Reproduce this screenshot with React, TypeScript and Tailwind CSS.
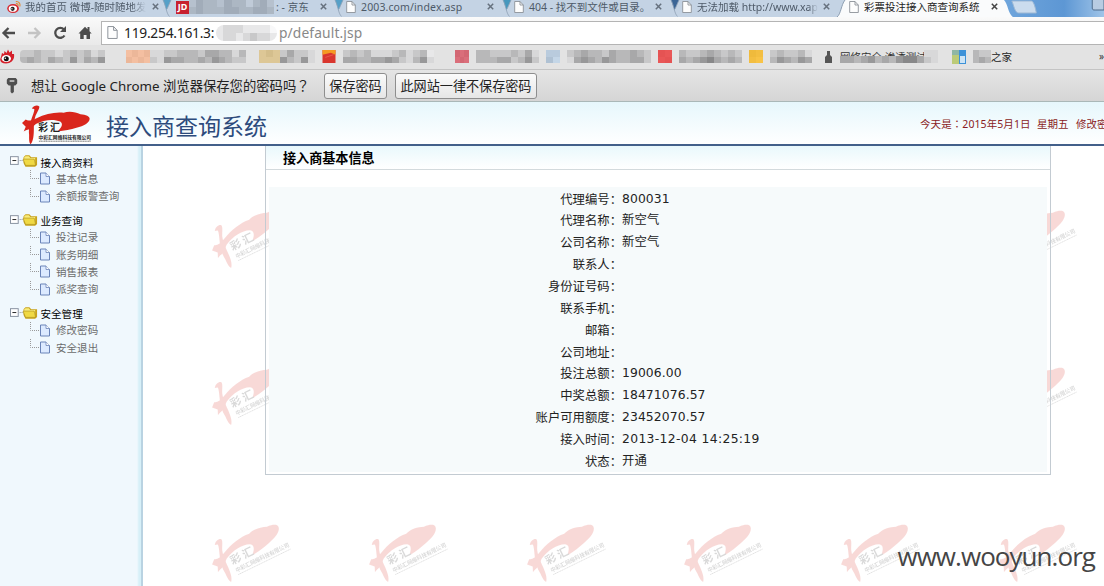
import React from "react";

const UI = "font-['Noto_Sans','Noto_Sans_CJK_SC',sans-serif]";

function Mosaic({ rows, tint, className }: { rows: string[]; tint?: string; className: string }) {
  const cols = rows[0].length;
  return (
    <svg viewBox={`0 0 ${cols} ${rows.length}`} preserveAspectRatio="none" shapeRendering="crispEdges" className={`shrink-0 ${className}`}>
      {rows.map((row, y) =>
        row.split("").map((c, x) => {
          const v = parseInt(c, 16) * 16 + 8;
          return <rect key={`${x}-${y}`} x={x} y={y} width={1.02} height={1.02} fill={`rgb(${v},${v},${v + 1})`} />;
        })
      )}
      {tint && <rect width={cols} height={rows.length} fill={tint} />}
    </svg>
  );
}

function PageIcon({ className = "" }: { className?: string }) {
  return (
    <svg viewBox="0 0 10 12" className={`h-3 w-2.5 shrink-0 ${className}`} fill="#fdfdfd" stroke="#8c9299" strokeWidth="0.9">
      <path d="M0.7.5H6L9.3 4V11.5H.7Z" />
      <path d="M6 .5V4H9.3" fill="none" />
    </svg>
  );
}

function WeiboIcon({ className = "" }: { className?: string }) {
  return (
    <svg viewBox="0 0 15 14" className={`shrink-0 ${className}`}>
      <ellipse cx="6.5" cy="8.6" rx="6.3" ry="4.8" fill="#d62a32" />
      <ellipse cx="6.3" cy="8.8" rx="4.5" ry="3.3" fill="#fff" />
      <circle cx="6" cy="9" r="2.2" fill="#222" />
      <circle cx="5.3" cy="8.9" r=".7" fill="#fff" />
      <path d="M9.5 1.2C12.5.7 14.8 3.5 13.6 6.4M9.6 3.4C11.2 3 12.3 4.4 11.7 6" fill="none" stroke="#e58a32" strokeWidth="1.2" />
    </svg>
  );
}

function Flame() {
  return (
    <svg viewBox="0 0 15 15" className="-mt-px h-[15px] w-[15px] shrink-0">
      <path d="M1 8L2 4 4 5 4.500 2 6.500 4 8 .5 9.500 3.500 12 1.500 12 5 14 5C15 11 11 14.500 6 14.500S-1 12 1 8Z" fill="#d5202a" />
      <ellipse cx="6.300" cy="9.500" rx="4.700" ry="3.600" fill="#fff" />
      <circle cx="6.300" cy="9.800" r="2.500" fill="#111" />
      <circle cx="5.300" cy="9.200" r=".8" fill="#fff" />
    </svg>
  );
}

function Cross({ active = false }: { active?: boolean }) {
  return (
    <svg viewBox="0 0 7 7" className="mb-px h-[7px] w-[7px] shrink-0" stroke={active ? "#444" : "#66717e"} strokeWidth="1.5">
      <path d="M.8.8L6.200 6.200M6.200.8L.8 6.200" />
    </svg>
  );
}

function TabEdge({ gap = "#4f7fb5" }: { gap?: string }) {
  return (
    <svg viewBox="0 0 14 17" className="h-[17px] w-3.5 shrink-0">
      <path d="M3 0H11L6.500 10Z" fill={gap} />
      <path d="M3 0C6 5 6 13 9.500 16.500" fill="none" stroke="#8fa1b5" strokeWidth=".8" />
      <path d="M11 0L7 9" fill="none" stroke="#8fa1b5" strokeWidth=".8" />
    </svg>
  );
}

function TabStrip() {
  return (
    <div className="flex h-[17px] w-full items-start overflow-hidden bg-[#c4d3e4] text-[10.500px] leading-[14px] whitespace-nowrap text-[#4e5a68]">
      <div className="flex w-[160px] shrink-0 items-center pl-[7px]">
        <WeiboIcon className="h-3.5 w-[14px]" />
        <span className="ml-1 w-[121px] [mask-image:linear-gradient(90deg,#000_88%,transparent)]">我的首页 微博-随时随地发</span>
        <span className="ml-[6px] flex"><Cross /></span>
      </div>
      <TabEdge gap="#55a0c8" />
      <div className="flex w-[158px] shrink-0 items-center pl-[2px]">
        <span className="flex h-[13px] w-[13px] items-center justify-center bg-[#c8202f] text-[9px] font-bold text-white">JD</span>
        <Mosaic rows={["cabbcabbdbac", "babbbaabbaab"]} tint="rgba(150,180,215,.35)" className="h-3.5 w-[85px]" />
        <span className="ml-[2px]">: - 京东</span>
        <span className="ml-[11px] flex"><Cross /></span>
      </div>
      <TabEdge gap="#55a0c8" />
      <div className="flex w-[154px] shrink-0 items-center">
        <PageIcon />
        <span className="ml-[5px] w-[102px] tracking-[0.12px]">2003.com/index.asp</span>
        <span className="ml-[24px] flex"><Cross /></span>
      </div>
      <TabEdge gap="#4597bd" />
      <div className="flex w-[154px] shrink-0 items-center">
        <PageIcon />
        <span className="ml-[5px] w-[124px]">404 - 找不到文件或目录。</span>
        <span className="ml-[2px] flex"><Cross /></span>
      </div>
      <TabEdge gap="#3b6596" />
      <div className="flex w-[151px] shrink-0 items-center">
        <PageIcon />
        <span className="ml-[5px] w-[121px] [mask-image:linear-gradient(90deg,#000_92%,transparent)]">无法加载 http://www.xap</span>
        <span className="ml-[5px] flex"><Cross /></span>
      </div>
      <svg viewBox="0 0 16 17" className="h-[17px] w-4 shrink-0">
        <path d="M4 17C8 14 8 5 12 0H16V17Z" fill="#fafbfc" />
        <path d="M4 17C8 14 8 5 12 0" fill="none" stroke="#8d9eb2" />
      </svg>
      <div className="flex h-[17px] w-[155px] shrink-0 items-start bg-[#fafbfc] text-[#222]">
        <div className="flex h-3.5 items-center">
          <PageIcon />
          <span className="ml-[5px] w-[117px]">彩票投注接入商查询系统</span>
          <span className="ml-[10px] flex"><Cross active /></span>
        </div>
      </div>
      <svg viewBox="0 0 102 17" preserveAspectRatio="none" className="h-[17px] min-w-0 grow">
        <defs>
          <linearGradient id="sky"><stop offset="0" stopColor="#6fa5dc" /><stop offset=".6" stopColor="#5d97d4" /><stop offset="1" stopColor="#9fc4e8" /></linearGradient>
        </defs>
        <rect width="102" height="17" fill="url(#sky)" />
        <path d="M0 0C4 4 4 13 9 17H0Z" fill="#fafbfc" />
        <path d="M8 1H28C31 1 33 13 33 13H15C11 13 10 5 8 1Z" fill="#cbdcee" stroke="#9db8d4" />
        <path d="M90 0V8C90 10 91 10 93 10H102V0" fill="#b8cce2" stroke="#4e6b8c" />
      </svg>
    </div>
  );
}

function Toolbar() {
  return (
    <div className="flex h-[28px] w-full items-center bg-[linear-gradient(#fafafa,#e9e9e9)] pt-[3px]">
      <svg viewBox="0 0 100 24" className="h-6 w-[100px] shrink-0" fill="none">
        <path d="M15 12H4M8.500 7L3.500 12 8.500 17" stroke="#4c4c4c" strokeWidth="2.300" />
        <path d="M28 12H39M34.500 7L39.500 12 34.500 17" stroke="#c3c3c3" strokeWidth="2.300" />
        <path d="M64 8.500A5 5 0 1 0 64.500 14.500" stroke="#4c4c4c" strokeWidth="2.300" />
        <path d="M66 5V11H60Z" fill="#4c4c4c" />
        <path d="M78.500 12.500L85 5.800 87.500 8.200V6H89.500V10.200L91.700 12.500H90V18H86.500V14H83.700V18H80.200V12.500Z" fill="#4c4c4c" />
      </svg>
      <div className="ml-px flex h-6 grow items-center border-y border-l border-[#b4b4b4] bg-white pl-[5px] text-[13.800px] leading-5 text-[#222]">
        <PageIcon className="h-[13px] w-[11px]" />
        <span className="ml-[6px] w-[93px] tracking-[-0.25px]">119.254.161.3:</span>
        <Mosaic rows={["edddeeeef", "eddedcdde"]} className="-ml-px h-4 w-[61px] rounded-full" />
        <span className="ml-[2px] tracking-[0.12px] text-[#888]">p/default.jsp</span>
      </div>
    </div>
  );
}

const GREY_A = ["ccbccdcbcbdc", "babcabc9cab9"];

function Bookmarks() {
  return (
    <div className="flex h-[25px] w-full items-start overflow-hidden border-b border-[#c4c4c4] bg-[#e3e3e3] pt-[5px]">
      <Flame />
      <Mosaic rows={GREY_A} className="ml-[5px] h-[13px] w-[85px] rounded-l" />
      <Mosaic rows={["eded", "dede"]} tint="rgba(255,150,90,.5)" className="ml-[21px] h-[13px] w-6" />
      <Mosaic rows={["ddccbbbcaabbdb", "cd9aabbab9abcc"]} className="h-[13px] w-[96px]" />
      <Mosaic rows={["dcd", "ddd"]} tint="rgba(230,175,50,.4)" className="ml-[13px] h-[13px] w-[21px]" />
      <Mosaic rows={["caccd", "9bc9d"]} className="h-[13px] w-[35px]" />
      <svg viewBox="0 0 14 14" className="ml-[7px] h-[13px] w-3.5 shrink-0">
        <rect width="14" height="14" fill="#d9362e" />
        <path d="M0 5V0H14V5L9 3Z" fill="#f49a22" />
        <path d="M3 8L12 5" stroke="#e7574e" />
      </svg>
      <Mosaic rows={["cbcbdddcbdcbe", "aabbaa9acdb9d"]} className="ml-[7px] h-[13px] w-[91px]" />
      <Mosaic rows={["aba", "bab"]} tint="rgba(240,60,80,.6)" className="ml-[21px] h-[13px] w-3.5" />
      <Mosaic rows={["bbcccbcad", "bbbaacb9c"]} className="ml-[7px] h-[13px] w-[63px]" />
      <Mosaic rows={["dd", "ce"]} tint="rgba(130,180,230,.35)" className="ml-[7px] h-[13px] w-3.5" />
      <Mosaic rows={["cbabbcabbabc", "da9ab9abbaac"]} className="ml-[7px] h-[13px] w-[84px]" />
      <Mosaic rows={["ab", "ba"]} tint="rgba(250,55,55,.75)" className="ml-[7px] h-[13px] w-3.5" />
      <Mosaic rows={["bccbabcbc", "aba98abab"]} className="ml-[7px] h-[13px] w-[63px]" />
      <Mosaic rows={["cd", "de"]} tint="rgba(255,180,0,.7)" className="ml-[7px] h-[13px] w-3.5" />
      <Mosaic rows={["cbccbd", "b9ab9a"]} className="ml-[7px] h-[13px] w-[42px]" />
      <svg viewBox="0 0 14 14" className="ml-[10px] h-3.5 w-3.5 shrink-0">
        <path d="M5 1H8V5L10 7V13H3V7L5 5Z" fill="#565656" />
      </svg>
      <div className="ml-[4px] flex h-3.5 w-[84px] shrink-0 flex-col text-[10.500px] leading-[15px] whitespace-nowrap text-[#333]">
        <span className="h-[6px] shrink-0">网络安全 渗透测试</span>
        <Mosaic rows={["aaba9bab988a"]} className="z-10 block h-[7px] w-[84px]" />
        <span className="z-10 h-[4px] w-[84px] shrink-0 bg-[#e3e3e3]" />
      </div>
      <Mosaic rows={["dd", "cd"]} className="h-[13px] w-3.5" />
      <svg viewBox="0 0 14 14" className="ml-[14px] h-3.5 w-3.5 shrink-0">
        <rect width="14" height="14" fill="#3d92d8" />
        <path d="M0 0H7V5H0Z" fill="#8fb7a4" />
        <path d="M0 5H7V14H0Z" fill="#bccb78" />
        <path d="M8 6H13V13H8Z" fill="#cde4f5" />
      </svg>
      <Mosaic rows={["bcc", "bab"]} className="ml-[7px] h-[13px] w-[18px]" />
      <span className="text-[10.500px] leading-[15px] whitespace-nowrap text-[#222]">之家</span>
      <span className="ml-auto text-[10px] leading-[13px] text-[#333]">»</span>
    </div>
  );
}

function PasswordBar() {
  const button = "ml-2 flex h-[26px] items-center justify-center rounded-[3px] border border-[#8e8e8e] bg-[linear-gradient(#fbfbfb,#e6e6e6)] text-[13.100px] whitespace-nowrap";
  return (
    <div className="flex h-8 w-full items-center border-b border-[#aab8b8] bg-[linear-gradient(#e5e5e5,#d5d5d5)] text-[13.330px] leading-5 text-[#222]">
      <svg viewBox="0 0 12 18" className="ml-[6px] h-[17px] w-3 shrink-0">
        <path d="M2 1H10L11.500 3V7L9.500 9H8V16L6 17.500 4.500 16V9H2.500L.5 7V3Z" fill="#4f4f4f" />
        <path d="M3.500 3.500H8.500V5H3.500Z" fill="#d8d8d8" />
      </svg>
      <span className="ml-[13px] w-[285px] whitespace-nowrap">想让 Google Chrome 浏览器保存您的密码吗<span className="font-['Noto_Sans_CJK_TC',sans-serif] leading-4">？</span></span>
      <span className={`${button} w-[63px]`}>保存密码</span>
      <span className={`${button} w-[142px]`}>此网站一律不保存密码</span>
    </div>
  );
}

function Logo({ className }: { className: string }) {
  return (
    <svg viewBox="64 18 210 118" className={className}>
      <path
        d="M67 71L78 61C84 66 96 64 110 57C135 45 165 38 190 41C205 35 225 38 240 45C256 46 268 51 267 59C266 70 250 80 228 85C212 90 192 94 172 96C184 85 190 74 180 67C160 58 132 62 108 74L92 88C84 92 76 92 72 96L78 82Z"
        fill="#d9261c"
      />
      <path d="M96 28C101 20 112 17 118 22C120 28 112 38 107 50C102 64 102 80 102 90C102 108 100 126 92 134C87 128 88 116 88 106C86 92 89 78 94 62C99 48 105 34 103 30Z" fill="#d9261c" />
      <text x="115" y="95" fontSize="29" fontWeight="700" textLength="64" fill="#222" className="font-['Noto_Sans_CJK_SC',sans-serif]">彩汇</text>
      <text x="116" y="118" fontSize="15" fontWeight="700" textLength="155" lengthAdjust="spacingAndGlyphs" fill="#222" className="font-['Noto_Sans_CJK_SC',sans-serif]">中彩汇网络科技有限公司</text>
      <path d="M117 125H270" stroke="#444" strokeWidth="2" strokeDasharray="4 1" />
    </svg>
  );
}

function PageHeader() {
  return (
    <header className="flex h-[44px] w-full items-center overflow-hidden border-b-[2px] border-[#43608a] bg-[linear-gradient(#e6f7fc,#ffffff)] whitespace-nowrap">
      <Logo className="mt-[3px] ml-[21px] h-[40px] w-[71px] shrink-0" />
      <h1 className="ml-[14px] pt-[5px] text-[23px] leading-8 text-[#2d4b7c]">接入商查询系统</h1>
      <div className="ml-[653px] flex shrink-0 pt-px text-[10.500px] leading-4 text-[#8a1c24]">
        <span className="w-[117px] shrink-0 tracking-[0.08px]">今天是<span className="font-['Noto_Sans_CJK_TC',sans-serif] leading-3">：</span>2015年5月1日</span>
        <span className="w-[39px] shrink-0">星期五</span>
        <span>修改密码</span>
      </div>
    </header>
  );
}

const TREE = [
  { name: "接入商资料", items: ["基本信息", "余额报警查询"] },
  { name: "业务查询", items: ["投注记录", "账务明细", "销售报表", "派奖查询"] },
  { name: "安全管理", items: ["修改密码", "安全退出"] },
];

function Sidebar() {
  return (
    <nav className="flex w-[143px] shrink-0 flex-col gap-[6.800px] border-r-2 border-[#b9d3e2] bg-[linear-gradient(90deg,#f0f8fd_137px,#d7f0f8_139px)] pt-[7px] text-[10.550px]">
      {TREE.map((group) => (
        <div key={group.name}>
          <div className="flex h-[17.250px] items-center text-black">
            <svg viewBox="0 0 30 17" className="ml-[10px] h-[17px] w-[29px] shrink-0">
              <rect x=".5" y="3.500" width="8" height="8" fill="#fff" stroke="#8791a0" />
              <path d="M2.500 7.500H6.500" stroke="#222" />
              <path d="M10 7.500H14" stroke="#888" strokeDasharray="1 1" />
              <path d="M14 4L16 2H20L22 4H28V12L26 14H16L14 10Z" fill="#c9a31b" />
              <path d="M14.500 4.500L16 3H19.500L21 5H26V11L25 12.500H16.500Z" fill="#f9ec7a" />
              <path d="M13.500 6H25L26.500 12.500H16Z" fill="#f0d944" stroke="#a98a1c" strokeWidth=".6" />
            </svg>
            <span className="ml-[1.500px] pt-[2px] leading-[16px]">{group.name}</span>
          </div>
          {group.items.map((item) => (
            <div key={item} className="flex h-[17.250px] items-center text-[#6b6b6b]">
              <svg viewBox="0 0 22 17" className="ml-[30px] h-[17px] w-[22px] shrink-0">
                <path d="M.5 0V8.500H9" fill="none" stroke="#999" strokeDasharray="1 1" />
                <path d="M10.500 3H16L19.500 6.500V14H10.500Z" fill="#dceaff" stroke="#6b84b8" />
                <path d="M16 3V6.500H19.500" fill="#fff" stroke="#6b84b8" strokeWidth=".8" />
              </svg>
              <span className="ml-[4px] leading-[16px]">{item}</span>
            </div>
          ))}
        </div>
      ))}
    </nav>
  );
}

const FIELDS: [string, string][] = [
  ["代理编号", "800031"],
  ["代理名称", "新空气"],
  ["公司名称", "新空气"],
  ["联系人", ""],
  ["身份证号码", ""],
  ["联系手机", ""],
  ["邮箱", ""],
  ["公司地址", ""],
  ["投注总额", "19006.00"],
  ["中奖总额", "18471076.57"],
  ["账户可用额度", "23452070.57"],
  ["接入时间", "2013-12-04 14:25:19"],
  ["状态", "开通"],
];

function Backdrop() {
  return (
    <div className="absolute top-[50.500px] left-[61px] grid grid-cols-[repeat(6,157.300px)] grid-rows-[repeat(3,157.300px)]">
      {Array.from({ length: 18 }, (_, i) => (
        <div key={i} className="pt-[16px] pl-[4px] opacity-[0.17]">
          <Logo className="h-[45px] w-[80px] -rotate-[26deg]" />
        </div>
      ))}
    </div>
  );
}

function InfoPanel() {
  return (
    <section className="relative h-[329px] w-[786px] border border-t-0 border-[#c3cbd2]">
      <h2 className="h-6 border-b border-[#d3dadd] bg-[linear-gradient(#e9f8fc,#ffffff)] pl-[17px] text-[13.100px] leading-[24px] font-bold text-black">接入商基本信息</h2>
      <dl className="mx-[3px] mt-[17px] h-[285px] bg-[#f6fafb] pt-[1.600px] text-[12.350px] leading-[21.860px] text-[#222]">
        {FIELDS.map(([label, value]) => (
          <div key={label} className="flex h-[21.860px]">
            <dt className="w-[353px] shrink-0 text-right">{label}：</dt>
            <dd className={value.includes(":") ? "font-['DejaVu_Sans',sans-serif] tracking-[0.35px]" : "font-['DejaVu_Sans','Noto_Sans_CJK_SC',sans-serif] tracking-[0.1px]"}>{value}</dd>
          </div>
        ))}
      </dl>
    </section>
  );
}

export default function App() {
  return (
    <div className={`relative flex h-[586px] w-[1104px] flex-col overflow-hidden bg-white ${UI}`}>
      <TabStrip />
      <Toolbar />
      <Bookmarks />
      <PasswordBar />
      <PageHeader />
      <div className="flex min-h-0 grow">
        <Sidebar />
        <main className="relative grow overflow-hidden pl-[122px]">
          <Backdrop />
          <InfoPanel />
        </main>
      </div>
      <div className="absolute top-[537px] right-[9px] font-['Open_Sans',sans-serif] text-[26px] leading-[38px] tracking-[-0.95px] text-[#454545]">www.wooyun.org</div>
    </div>
  );
}
